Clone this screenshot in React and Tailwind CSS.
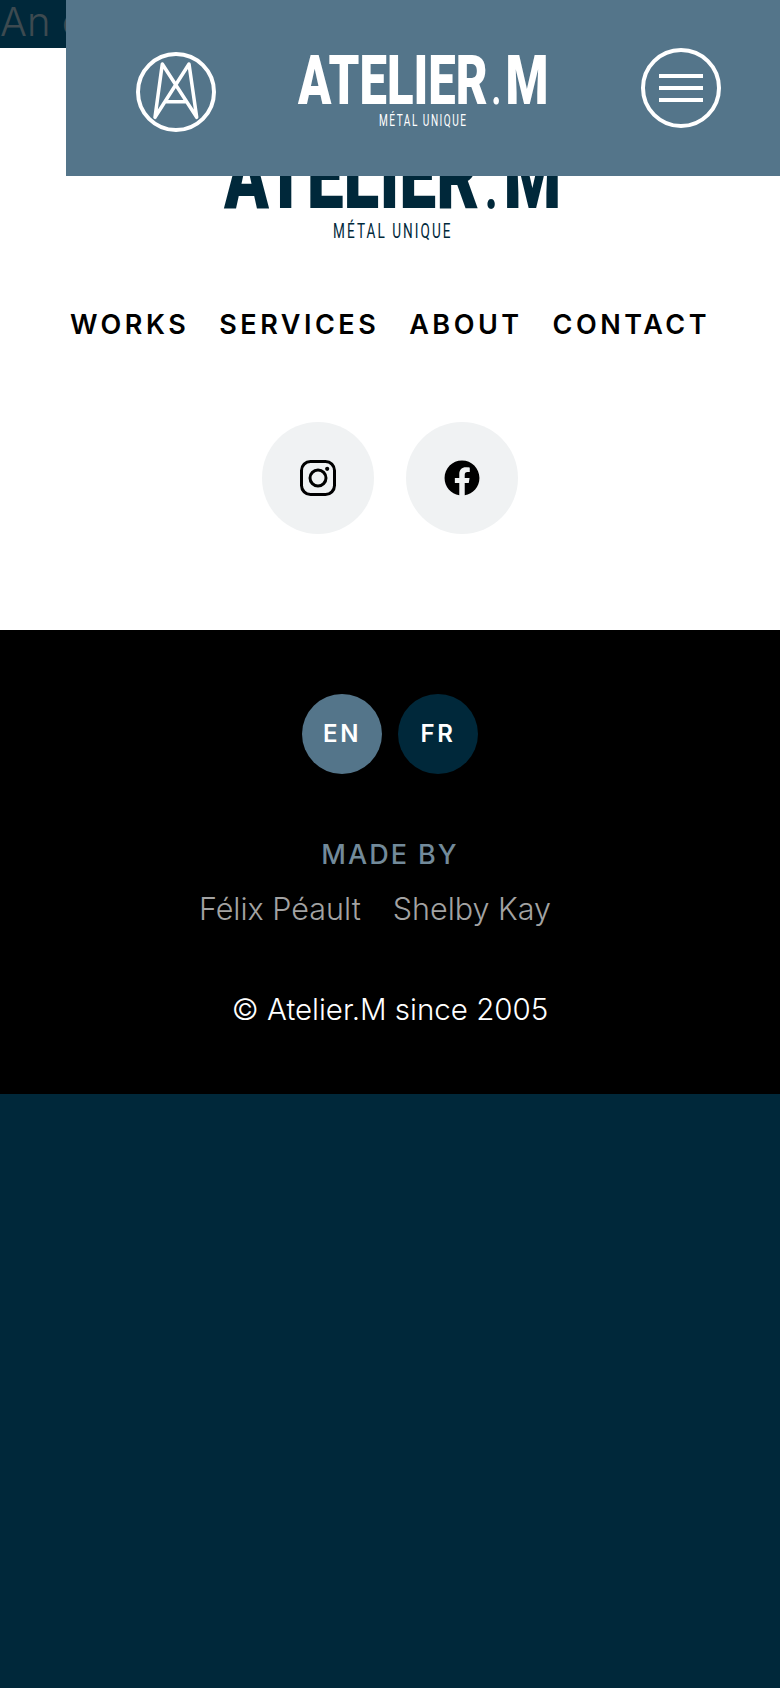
import { FaFacebook } from 'react-icons/fa'

const navLinks = ['WORKS', 'SERVICES', 'ABOUT', 'CONTACT']
const sans = "font-['Inter',sans-serif]"
const logoFont = "font-['Roboto',sans-serif]"

function Monogram() {
  return (
    <svg width="80" height="80" viewBox="0 0 80 80" fill="none" stroke="white" strokeWidth="3.5">
      <circle cx="40" cy="40" r="38" strokeWidth="4" />
      <path d="M19 65.3 26.3 12 60.7 65.3 53 12 19 65.3M29.7 49.7H50.7" strokeLinejoin="round" strokeLinecap="round" />
    </svg>
  )
}

function InstagramIcon() {
  return (
    <svg width="36" height="36" viewBox="0 0 36 36" fill="none" stroke="black" strokeWidth="3">
      <rect x="1.5" y="1.5" width="33" height="33" rx="9" />
      <circle cx="18" cy="18" r="8" />
      <circle cx="27.2" cy="8.8" r="2.1" fill="black" stroke="none" />
    </svg>
  )
}

function Logo({ color, big }) {
  return (
    <div className={`flex flex-col items-center ${color} ${logoFont} ${big ? 'ml-[5px] w-[337px]' : 'w-[250px]'}`}>
      <div className={`scale-x-[0.71] whitespace-nowrap font-black ${big ? 'h-[66px] text-[93px] leading-[66px]' : 'h-[49px] text-[69px] leading-[49px]'}`}>
        ATELIER<span className="mx-[0.05em] font-normal">.</span>M
      </div>
      <div className={`whitespace-nowrap ${big ? 'mt-[14px] scale-x-[0.68] text-[20px] leading-[15px] tracking-[3px]' : 'mt-[10px] scale-x-[0.63] text-[16px] leading-[12px] tracking-[2.4px]'}`}>
        MÉTAL UNIQUE
      </div>
    </div>
  )
}

export default function App() {
  return (
    <div className={`relative flex min-h-[1688px] flex-col bg-[#00283a] ${sans}`}>
      {/* top bar, mostly hidden under the header */}
      <div className="h-[48px] overflow-hidden whitespace-nowrap bg-[#00283a] text-[40px] font-light leading-[44px] text-[#3d4a50]">
        An error occurred
      </div>

      <header className="absolute right-0 top-0 z-10 flex h-[176px] w-[714px] items-start bg-[#54758a] pt-[48px]">
        <div className="ml-[70px] mt-[4px]">
          <Monogram />
        </div>
        <div className="ml-[82px] mt-[8px]">
          <Logo color="text-white" />
        </div>
        <div className="ml-[93px] flex h-[80px] w-[80px] flex-col items-center justify-center gap-[8px] rounded-full border-[4px] border-white">
          <span className="h-[4px] w-[44px] bg-white" />
          <span className="h-[4px] w-[44px] bg-white" />
          <span className="h-[4px] w-[44px] bg-white" />
        </div>
      </header>

      <section className="flex h-[582px] flex-col items-center bg-white pt-[96px]">
        <Logo color="text-[#00283a]" big />
        <nav className="mt-[70px] flex gap-[30px] text-[27px] font-semibold leading-[32px] tracking-[3.5px] text-black">
          {navLinks.map((link) => (
            <a key={link}>{link}</a>
          ))}
        </nav>
        <div className="mt-[81px] flex gap-[32px]">
          <div className="flex h-[112px] w-[112px] items-center justify-center rounded-full bg-[#f0f2f3]">
            <InstagramIcon />
          </div>
          <div className="flex h-[112px] w-[112px] items-center justify-center rounded-full bg-[#f0f2f3]">
            <FaFacebook className="h-[36px] w-[36px] text-black" />
          </div>
        </div>
      </section>

      <footer className="flex h-[464px] flex-col items-center bg-black pt-[64px]">
        <div className="flex gap-[16px] text-[24px] font-semibold tracking-[2.5px] text-white">
          <div className="flex h-[80px] w-[80px] items-center justify-center rounded-full bg-[#54758a]">EN</div>
          <div className="flex h-[80px] w-[80px] items-center justify-center rounded-full bg-[#00283a]">FR</div>
        </div>
        <div className="mt-[64px] text-[27px] font-medium leading-[34px] tracking-[2px] text-[#728a9a]">MADE BY</div>
        <div className="mt-[17px] flex gap-[32px] pr-[30px] text-[30.5px] font-light leading-[40px] text-[#a3a3a3]">
          <span>Félix Péault</span>
          <span>Shelby Kay</span>
        </div>
        <div className="mt-[60px] text-[29.5px] font-light leading-[40px] text-white">© Atelier.M since 2005</div>
      </footer>

      <div className="flex-1 bg-[#00283a]" />
    </div>
  )
}
